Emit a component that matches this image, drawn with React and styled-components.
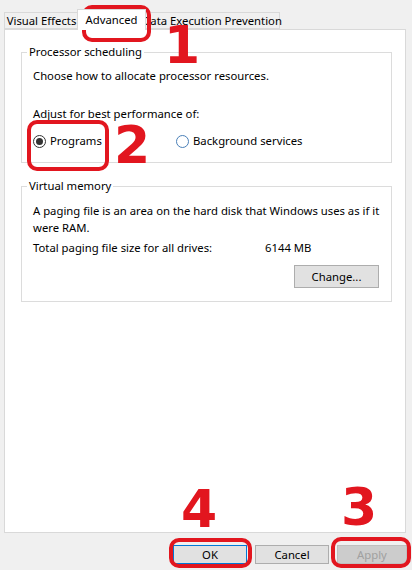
import React from "react";
import styled, { createGlobalStyle } from "styled-components";

const Global = createGlobalStyle`
  html, body { margin: 0; padding: 0; }
  body {
    background: #f0f0f0;
    font-family: "Segoe UI", "Noto Sans", sans-serif;
    font-size: 11.3px;
    color: #000;
  }
`;

const RED = "#e2161f";

export default function App() {
  return (
    <Window>
      <Global />
      <TabStrip>
        <Tab width={75}>Visual Effects</Tab>
        <Tab width={69} active>Advanced</Tab>
        <Tab width={136}>Data Execution Prevention</Tab>
      </TabStrip>

      <Panel>
        <Group>
          <Legend>Processor scheduling</Legend>
          <Line top={8}>Choose how to allocate processor resources.</Line>
          <Line top={22}>Adjust for best performance of:</Line>
          <RadioRow>
            <Option width={143}>
              <Radio checked />
              Programs
            </Option>
            <Option>
              <Radio />
              Background services
            </Option>
          </RadioRow>
        </Group>

        <Group spaced>
          <Legend>Virtual memory</Legend>
          <Para>
            A paging file is an area on the hard disk that Windows uses as if it
            <br />
            were RAM.
          </Para>
          <TotalRow>
            <span>Total paging file size for all drives:</span>
            <span>6144 MB</span>
          </TotalRow>
          <ButtonRow>
            <Button width={85} height={23}>Change...</Button>
          </ButtonRow>
        </Group>
      </Panel>

      <DialogButtons>
        <Button width={74} isDefault>OK</Button>
        <Button width={74}>Cancel</Button>
        <Button width={70} disabled>Apply</Button>
      </DialogButtons>

      {/* annotations drawn over the screenshot */}
      <Mark style={{ left: 82, top: 5, width: 69, height: 37 }} />
      <Digit style={{ left: 164, top: 19 }}>1</Digit>
      <Mark style={{ left: 27, top: 120, width: 82, height: 51 }} />
      <Digit style={{ left: 114, top: 119 }}>2</Digit>
      <Digit style={{ left: 341, top: 481 }}>3</Digit>
      <Mark style={{ left: 331, top: 537, width: 80, height: 31 }} />
      <Digit style={{ left: 181, top: 483 }}>4</Digit>
      <Mark style={{ left: 169, top: 538, width: 83, height: 30 }} />
    </Window>
  );
}

// CSS
const Window = styled.div`
  position: relative;
  width: 412px;
  height: 570px;
  box-sizing: border-box;
  padding-bottom: 6px;
  display: flex;
  flex-direction: column;
  overflow: hidden;
`;

const TabStrip = styled.div`
  display: flex;
  align-items: flex-end;
  height: 20px;
  margin-top: 9px;
  padding-left: 4px;
`;

const Tab = styled.div`
  box-sizing: border-box;
  width: ${(p) => p.width}px;
  height: ${(p) => (p.active ? 21 : 17)}px;
  margin: ${(p) => (p.active ? "0 -2px -1px" : "0")};
  position: relative;
  z-index: ${(p) => (p.active ? 1 : 0)};
  border: 1px solid #d9d9d9;
  border-bottom: ${(p) => (p.active ? "none" : "1px solid #d9d9d9")};
  background: ${(p) => (p.active ? "#fff" : "#f0f0f0")};
  display: flex;
  align-items: ${(p) => (p.active ? "flex-start" : "center")};
  justify-content: center;
  padding-top: ${(p) => (p.active ? 2 : 0)}px;
  line-height: 15px;
  white-space: nowrap;
`;

const Panel = styled.div`
  flex: 1;
  margin: 0 6px 0 4px;
  border: 1px solid #d9d9d9;
  background: #fff;
  padding: 14px 13px 0 16px;
`;

const Group = styled.fieldset`
  margin: ${(p) => (p.spaced ? "15px 0 0" : "0")};
  border: 1px solid #dcdcdc;
  padding: 0 12px 13px 11px;
  min-width: 0;
`;

const Legend = styled.legend`
  margin-left: -6px;
  padding: 0 2px;
  line-height: 16px;
`;

const Line = styled.div`
  margin-top: ${(p) => p.top}px;
  line-height: 16px;
`;

const Para = styled.div`
  margin-top: 8px;
  line-height: 17px;
  white-space: nowrap;
`;

const RadioRow = styled.div`
  display: flex;
  margin-top: 11px;
  line-height: 16px;
`;

const Option = styled.label`
  display: flex;
  align-items: center;
  gap: 4px;
  ${(p) => (p.width ? `width: ${p.width}px;` : "")}
`;

const Radio = styled.span`
  box-sizing: border-box;
  width: 13px;
  height: 13px;
  border-radius: 50%;
  border: 1px solid ${(p) => (p.checked ? "#333" : "#4a80b8")};
  background: #fff;
  display: flex;
  align-items: center;
  justify-content: center;
  &::after {
    content: "";
    width: 7px;
    height: 7px;
    border-radius: 50%;
    background: ${(p) => (p.checked ? "#333" : "transparent")};
  }
`;

const TotalRow = styled.div`
  display: grid;
  grid-template-columns: 232px auto;
  margin-top: 4px;
  line-height: 16px;
`;

const ButtonRow = styled.div`
  display: flex;
  justify-content: flex-end;
  margin-top: 9px;
`;

const Button = styled.button`
  box-sizing: border-box;
  width: ${(p) => p.width}px;
  height: ${(p) => p.height || 19}px;
  padding: 0;
  font: inherit;
  color: ${(p) => (p.disabled ? "#a0a0a0" : "#000")};
  background: ${(p) => (p.disabled ? "#cccccc" : "#e1e1e1")};
  border: 1px solid
    ${(p) => (p.isDefault ? "#0078d7" : p.disabled ? "#bfbfbf" : "#adadad")};
  border-radius: 0;
`;

const DialogButtons = styled.div`
  display: flex;
  justify-content: flex-end;
  gap: 8px;
  margin-top: 12px;
  padding-right: 5px;
`;

const Mark = styled.div`
  position: absolute;
  box-sizing: border-box;
  border: 4px solid ${RED};
  border-radius: 10px;
  pointer-events: none;
`;

const Digit = styled.div`
  position: absolute;
  font-family: "DejaVu Sans", sans-serif;
  font-weight: bold;
  font-size: 52px;
  line-height: 1;
  color: ${RED};
  pointer-events: none;
`;
